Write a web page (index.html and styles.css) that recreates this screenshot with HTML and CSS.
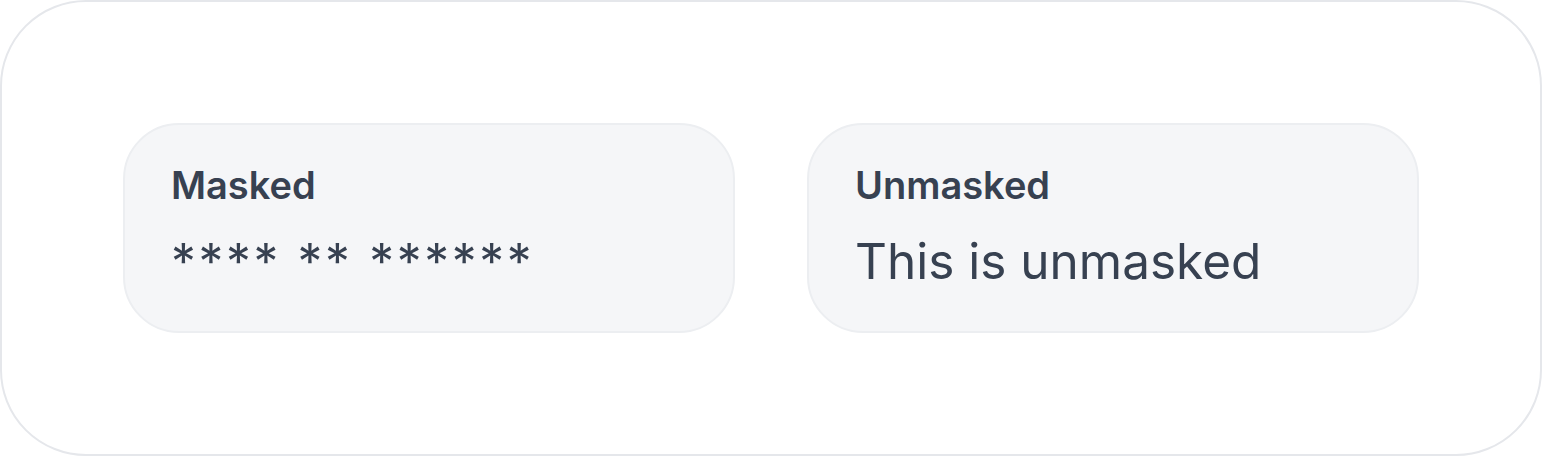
FILE: index.html
```html
<!DOCTYPE html>
<html lang="en">
  <head>
    <meta charset="UTF-8" />
    <meta name="viewport" content="width=device-width, initial-scale=1.0" />
    <title>Masked field</title>
    <link rel="stylesheet" href="styles.css">
  </head>
  <body>
    <div class="frame">
      <div class="field-card">
        <div class="field-label">Masked</div>
        <div class="field-value masked">**** ** ******</div>
      </div>
      <div class="field-card">
        <div class="field-label">Unmasked</div>
        <div class="field-value">This is unmasked</div>
      </div>
    </div>
  </body>
</html>
```

FILE: styles.css
```css
* {
  box-sizing: border-box;
}
body {
  margin: 0;
  font-family: Inter, "Noto Sans", sans-serif;
  color: #374151;
  background: #ffffff;
}
.frame {
  width: 1542px;
  height: 456px;
  border: 2px solid #e5e7eb;
  border-radius: 86px;
  padding: 121px;
  display: flex;
  gap: 72px;
}
.field-card {
  flex: 1;
  height: 210px;
  background-color: #f5f6f8;
  border: 2px solid #eceef1;
  border-radius: 56px;
  padding: 38px 46px 42px;
  display: flex;
  flex-direction: column;
  gap: 26px;
}
.field-label {
  font-size: 38px;
  line-height: 44px;
  font-weight: 600;
}
.field-value {
  font-size: 49.5px;
  line-height: 56px;
  font-weight: 400;
}
.field-value.masked {
  letter-spacing: 2.7px;
}
```
